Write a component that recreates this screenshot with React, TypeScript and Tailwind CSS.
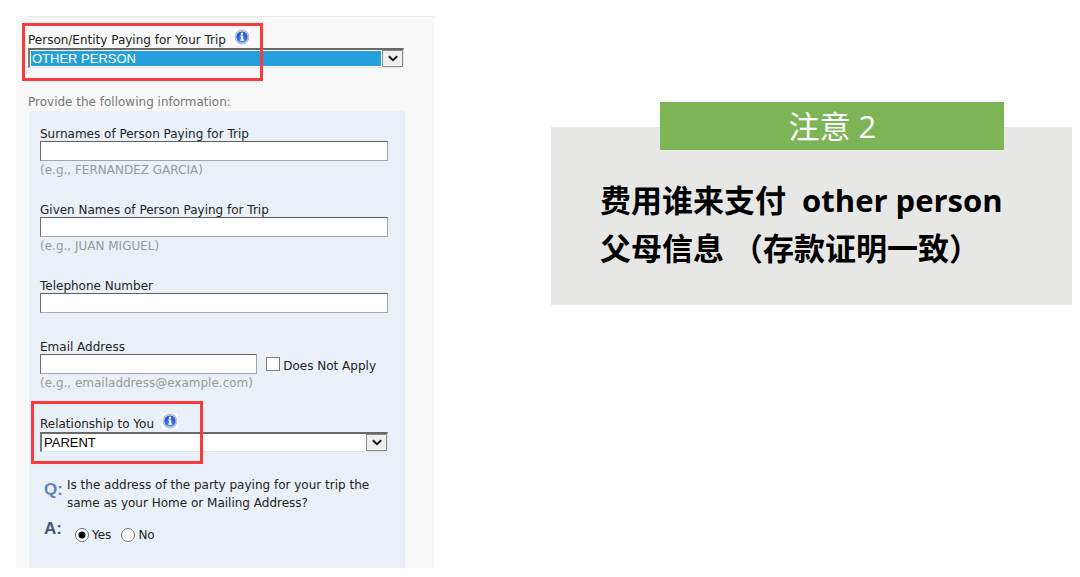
import { useState, type ReactNode } from "react";

function InfoIcon() {
  return (
    <svg viewBox="0 0 16 16" className="size-4 shrink-0 bg-white" role="img" aria-label="Help">
      <defs>
        <radialGradient id="info-fill" cx="50%" cy="75%" r="70%">
          <stop offset="0" stopColor="#5aa0fa" />
          <stop offset="0.6" stopColor="#2f63dc" />
          <stop offset="1" stopColor="#2450c0" />
        </radialGradient>
      </defs>
      <circle cx="8" cy="8" r="7.4" fill="#a9b9d6" />
      <circle cx="8" cy="8" r="6.5" fill="#cdd9ef" />
      <circle cx="8" cy="8" r="5.6" fill="url(#info-fill)" />
      <circle cx="8" cy="4.700" r="1.2" fill="#fff" />
      <path d="M6.300 6.600h2.800v4h.9v1.200H6.200v-1.200h.9V7.800h-.8z" fill="#fff" />
    </svg>
  );
}

function SelectBox({ id, options, highlighted = false }: { id: string; options: string[]; highlighted?: boolean }) {
  return (
    <div className="relative h-5 border-t-2 border-l-2 border-r border-b border-t-[#696969] border-l-[#7a7a7a] border-r-[#e3e3e3] border-b-[#e3e3e3] bg-white">
      <select
        id={id}
        className={
          highlighted
            ? "block h-[17px] w-full appearance-none rounded-none border border-white bg-[#26a0da] pl-px font-['Liberation_Sans',sans-serif] text-[13px] leading-[15px] text-white outline-none"
            : "block h-[17px] w-full appearance-none rounded-none border border-white bg-white pl-px font-['Liberation_Sans',sans-serif] text-[13px] leading-[15px] text-black outline-none"
        }
      >
        {options.map((option) => (
          <option key={option}>{option}</option>
        ))}
      </select>
      <span className="pointer-events-none absolute inset-y-0 right-0 flex bg-white pl-px">
        <span className="flex w-[21px] items-center justify-center border border-[#8a8a8a] bg-[#efefef]">
          <svg viewBox="0 0 10 7" className="h-[7px] w-[10px]" aria-hidden="true">
            <path d="M.8 1.2 5 5.2l4.200-4" fill="none" stroke="#1a1a1a" strokeWidth="2" />
          </svg>
        </span>
      </span>
    </div>
  );
}

function FieldLabel({ htmlFor, children }: { htmlFor: string; children: ReactNode }) {
  return (
    <label htmlFor={htmlFor} className="block h-[17px] leading-[20px] text-[#222]">
      {children}
    </label>
  );
}

function TextInput({ id, type = "text" }: { id: string; type?: string }) {
  return (
    <input
      id={id}
      type={type}
      className="block h-5 w-full min-w-0 rounded-none border border-t-[#5f5f5f] border-l-[#6f6f6f] border-r-[#a5a5a5] border-b-[#a5a5a5] bg-white px-1 outline-none"
    />
  );
}

function Hint({ children }: { children: ReactNode }) {
  return <p className="leading-[18px] text-[#999]">{children}</p>;
}

function Radio({ label, checked, onChange }: { label: string; checked: boolean; onChange: () => void }) {
  return (
    <label className="flex items-center gap-[3px]">
      <input
        type="radio"
        name="same-address"
        checked={checked}
        onChange={onChange}
        className="size-[14px] appearance-none rounded-full border border-[#707070] bg-white checked:bg-[radial-gradient(circle,#000_0_3px,#fff_4px)]"
      />
      <span className="leading-[18px]">{label}</span>
    </label>
  );
}

function PayerForm() {
  const [same, setSame] = useState(true);
  return (
    <form className="bg-[#f8f8f8] pl-3 font-['DejaVu_Sans',Verdana,sans-serif] text-[12px] text-[#222]">
      <div className="border-t border-dotted border-[#dcdcdc] pt-[14px] pr-[30px]">
        <div className="relative">
          <div className="flex h-[17px] items-center gap-2">
            <label htmlFor="payer" className="leading-[18px] whitespace-nowrap">
              Person/Entity Paying for Your Trip
            </label>
            <span className="-mt-[5px]">
              <InfoIcon />
            </span>
          </div>
          <SelectBox id="payer" highlighted options={["OTHER PERSON", "SELF", "OTHER COMPANY/ORGANIZATION"]} />
          <div className="pointer-events-none absolute -top-2 -left-[6px] h-[58px] w-[241px] border-[3px] border-[#fb3b3b]" />
        </div>
        <p className="mt-[25px] leading-[18px] text-[#777]">Provide the following information:</p>
      </div>

      <div className="mr-[29px] ml-px bg-[#e9f0f7] pt-[13px] pr-[17px] pb-6 pl-[11px]">
        <div className="mb-[21px]">
          <FieldLabel htmlFor="surnames">Surnames of Person Paying for Trip</FieldLabel>
          <TextInput id="surnames" />
          <Hint>(e.g., FERNANDEZ GARCIA)</Hint>
        </div>
        <div className="mb-[21px]">
          <FieldLabel htmlFor="given">Given Names of Person Paying for Trip</FieldLabel>
          <TextInput id="given" />
          <Hint>(e.g., JUAN MIGUEL)</Hint>
        </div>
        <div className="mb-6">
          <FieldLabel htmlFor="phone">Telephone Number</FieldLabel>
          <TextInput id="phone" type="tel" />
        </div>
        <div className="mb-[23px]">
          <FieldLabel htmlFor="email">Email Address</FieldLabel>
          <div className="flex items-center">
            <div className="min-w-0 flex-1">
              <TextInput id="email" type="email" />
            </div>
            <label className="ml-[9px] flex items-center gap-[3px] pr-3">
              <input
                type="checkbox"
                className="size-[14px] appearance-none border border-[#808080] bg-white checked:bg-[#333]"
              />
              <span className="pt-1 leading-4 whitespace-nowrap">Does Not Apply</span>
            </label>
          </div>
          <Hint>(e.g., emailaddress@example.com)</Hint>
        </div>

        <div className="relative">
          <div className="flex h-[17px] items-center gap-2">
            <label htmlFor="relationship" className="leading-[18px] whitespace-nowrap">
              Relationship to You
            </label>
            <span className="-mt-[5px]">
              <InfoIcon />
            </span>
          </div>
          <SelectBox id="relationship" options={["PARENT", "CHILD", "SPOUSE", "FRIEND", "OTHER"]} />
          <div className="pointer-events-none absolute -top-[14px] -left-[9px] h-[63px] w-[172px] border-[3px] border-[#fb3b3b]" />
        </div>

        <div
          role="radiogroup"
          aria-labelledby="address-question"
          className="mt-6 grid grid-cols-[27px_1fr] gap-y-[6px]"
        >
          <span className="pt-[3px] pl-1 font-['Liberation_Sans',sans-serif] text-[17px] leading-[22px] font-bold text-[#6484bd]">
            Q:
          </span>
          <p id="address-question" className="-mr-3 leading-[18px]">
            Is the address of the party paying for your trip the
            <br />
            same as your Home or Mailing Address?
          </p>
          <span className="pl-1 font-['Liberation_Sans',sans-serif] text-[17px] leading-[22px] font-bold text-[#43567f]">
            A:
          </span>
          <div className="flex items-center gap-[10px] pt-2 pl-2">
            <Radio label="Yes" checked={same} onChange={() => setSame(true)} />
            <Radio label="No" checked={!same} onChange={() => setSame(false)} />
          </div>
        </div>
      </div>
    </form>
  );
}

function Notice() {
  return (
    <section className="mt-[111px] bg-[#e7e8e6] pb-[33px] font-['Open_Sans','Noto_Sans_CJK_SC',sans-serif]">
      <h2 className="-mt-[25px] mr-[13%] ml-[21%] h-12 bg-[#7db455] text-center text-[31px] leading-[48px] font-normal text-white">
        注意 2
      </h2>
      <p className="mt-[26px] pl-[49px] text-[31px] leading-[48px] font-bold whitespace-pre text-black">
        {"费用谁来支付  other person\n父母信息 （存款证明一致）"}
      </p>
    </section>
  );
}

export default function App() {
  return (
    <main className="min-h-screen bg-white">
      <div className="grid grid-cols-[418fr_117fr_521fr] items-start pt-4 pr-2 pl-4">
        <PayerForm />
        <div />
        <Notice />
      </div>
    </main>
  );
}
